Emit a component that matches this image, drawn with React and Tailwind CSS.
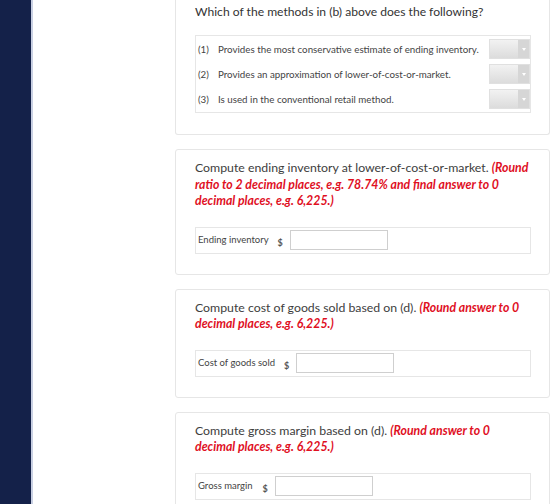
const font = { fontFamily: 'Lato, "Open Sans", sans-serif' };

const methodRows = [
  { num: '(1)', text: 'Provides the most conservative estimate of ending inventory.' },
  { num: '(2)', text: 'Provides an approximation of lower-of-cost-or-market.' },
  { num: '(3)', text: 'Is used in the conventional retail method.' },
];

function Dropdown() {
  return (
    <div className="flex h-[20px] w-[41px] shrink-0 border border-[#e0e0e0] bg-gradient-to-b from-[#f2f2f2] to-[#dcdcdc]">
      <div className="flex-1" />
      <div className="flex w-[11px] items-center justify-center bg-[#d6d6d6]">
        <span className="h-0 w-0 border-x-[2px] border-t-[3px] border-x-transparent border-t-white" />
      </div>
    </div>
  );
}

function Card({ children, className = '' }) {
  return (
    <div className={`rounded-[3px] border border-[#e6e6e6] bg-white pl-[19px] pr-[18px] ${className}`}>
      {children}
    </div>
  );
}

function AnswerRow({ label, dollarGap }) {
  return (
    <div className="mt-[17px] flex h-[27px] items-center border border-[#e6e6e6] pl-[2px]">
      <span className="text-[9.5px] text-[#444]">{label}</span>
      <span className={`mt-[5px] text-[9px] font-bold text-[#555] ${dollarGap}`}>$</span>
      <div className="ml-[7px] h-[20px] w-[98px] border border-[#cfcfcf] bg-white" />
    </div>
  );
}

function Prompt({ children, hint }) {
  return (
    <p className="text-[12.3px] leading-[16.5px] text-[#3d3d3d]">
      {children} <span className="font-bold italic text-[#e0101f]">{hint}</span>
    </p>
  );
}

export default function App() {
  return (
    <div className="flex min-h-[504px] w-[560px] bg-white" style={font}>
      <div className="w-[33px] shrink-0 border-r-2 border-[#c9d0e3] bg-[#142149]" />
      <div className="flex flex-1 flex-col gap-[14px] pl-[142px] pr-[10px]">
        <Card className="rounded-t-none border-t-0 pb-[21px] pt-[3px]">
          <h2 className="text-[12.1px] leading-[17px] text-[#333]">
            Which of the methods in (b) above does the following?
          </h2>
          <div className="mt-[15px] flex flex-col gap-[5px] border border-[#e6e6e6] py-[3px] pl-[2px]">
            {methodRows.map((row) => (
              <div key={row.num} className="flex h-[20px] items-center text-[9.75px] text-[#444]">
                <span className="w-[20px]">{row.num}</span>
                <span className="flex-1">{row.text}</span>
                <Dropdown />
              </div>
            ))}
          </div>
        </Card>

        <Card className="pb-[20px] pt-[10px]">
          <Prompt hint="(Round ratio to 2 decimal places, e.g. 78.74% and final answer to 0 decimal places, e.g. 6,225.)">
            Compute ending inventory at lower-of-cost-or-market.
          </Prompt>
          <AnswerRow label="Ending inventory" dollarGap="ml-[9px]" />
        </Card>

        <Card className="pb-[20px] pt-[10px]">
          <Prompt hint="(Round answer to 0 decimal places, e.g. 6,225.)">
            Compute cost of goods sold based on (d).
          </Prompt>
          <AnswerRow label="Cost of goods sold" dollarGap="ml-[9px]" />
        </Card>

        <Card className="pb-[20px] pt-[10px]">
          <Prompt hint="(Round answer to 0 decimal places, e.g. 6,225.)">
            Compute gross margin based on (d).
          </Prompt>
          <AnswerRow label="Gross margin" dollarGap="ml-[10px]" />
        </Card>
      </div>
    </div>
  );
}
